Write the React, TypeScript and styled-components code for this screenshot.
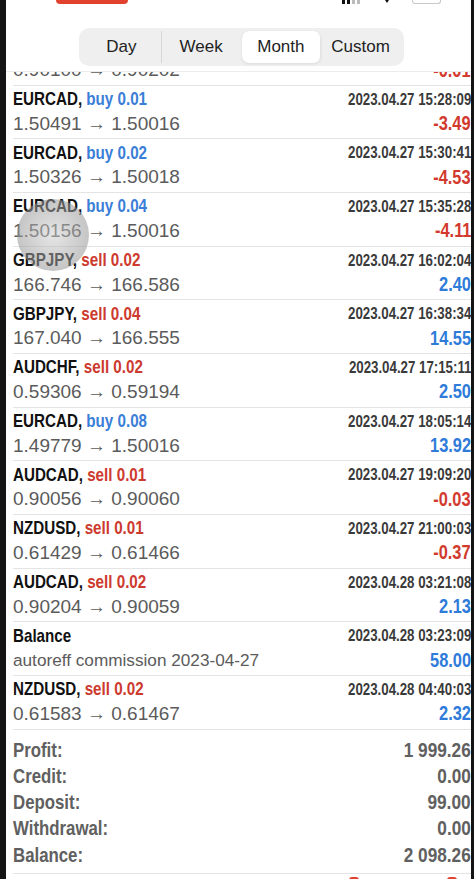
import React from 'react'
import styled, { createGlobalStyle, css } from 'styled-components'

type Deal = {
  symbol: string
  side?: 'buy' | 'sell'
  volume?: string
  prices: string
  time: string
  profit: string
}

const deals: Deal[] = [
  { symbol: 'EURCAD', side: 'buy', volume: '0.01', prices: '1.50491 → 1.50016', time: '2023.04.27 15:28:09', profit: '-3.49' },
  { symbol: 'EURCAD', side: 'buy', volume: '0.02', prices: '1.50326 → 1.50018', time: '2023.04.27 15:30:41', profit: '-4.53' },
  { symbol: 'EURCAD', side: 'buy', volume: '0.04', prices: '1.50156 → 1.50016', time: '2023.04.27 15:35:28', profit: '-4.11' },
  { symbol: 'GBPJPY', side: 'sell', volume: '0.02', prices: '166.746 → 166.586', time: '2023.04.27 16:02:04', profit: '2.40' },
  { symbol: 'GBPJPY', side: 'sell', volume: '0.04', prices: '167.040 → 166.555', time: '2023.04.27 16:38:34', profit: '14.55' },
  { symbol: 'AUDCHF', side: 'sell', volume: '0.02', prices: '0.59306 → 0.59194', time: '2023.04.27 17:15:11', profit: '2.50' },
  { symbol: 'EURCAD', side: 'buy', volume: '0.08', prices: '1.49779 → 1.50016', time: '2023.04.27 18:05:14', profit: '13.92' },
  { symbol: 'AUDCAD', side: 'sell', volume: '0.01', prices: '0.90056 → 0.90060', time: '2023.04.27 19:09:20', profit: '-0.03' },
  { symbol: 'NZDUSD', side: 'sell', volume: '0.01', prices: '0.61429 → 0.61466', time: '2023.04.27 21:00:03', profit: '-0.37' },
  { symbol: 'AUDCAD', side: 'sell', volume: '0.02', prices: '0.90204 → 0.90059', time: '2023.04.28 03:21:08', profit: '2.13' },
  { symbol: 'Balance', prices: 'autoreff commission 2023-04-27', time: '2023.04.28 03:23:09', profit: '58.00' },
  { symbol: 'NZDUSD', side: 'sell', volume: '0.02', prices: '0.61583 → 0.61467', time: '2023.04.28 04:40:03', profit: '2.32' },
]

const totals = [
  ['Profit:', '1 999.26'],
  ['Credit:', '0.00'],
  ['Deposit:', '99.00'],
  ['Withdrawal:', '0.00'],
  ['Balance:', '2 098.26'],
]

const periods = ['Day', 'Week', 'Month', 'Custom']

const GlobalStyle = createGlobalStyle`
  html, body {
    margin: 0;
    padding: 0;
    background: #111;
  }
  body {
    font-family: "Liberation Sans", Arial, sans-serif;
  }
`

export default function App() {
  return (
    <>
      <GlobalStyle />
      <Page>
        <Edge $w={6} />
        <Screen>
          <Header>
            <StatusBar>
              <RecordPill />
              <StatusIcons>
                <svg width="20" height="4" viewBox="0 0 20 4">
                  <rect x="0" y="0" width="3" height="4" fill="#111" />
                  <rect x="5" y="0" width="3" height="4" fill="#111" />
                  <rect x="10" y="0" width="3" height="4" fill="#bbb" />
                  <rect x="15" y="0" width="3" height="4" fill="#bbb" />
                </svg>
                <svg width="6" height="4" viewBox="0 0 6 4">
                  <path d="M1 0 L5 0 L3 3 Z" fill="#111" />
                </svg>
                <Battery />
              </StatusIcons>
            </StatusBar>
            <Segmented>
              {periods.map((p, i) => (
                <Segment key={p} $active={p === 'Month'} $divider={i === 0}>
                  {p}
                </Segment>
              ))}
            </Segmented>
          </Header>

          <Viewport>
            <Scroller>
              <Row>
                <Line>
                  <Title>NZDUSD, <Side $side="sell">sell 0.01</Side></Title>
                  <Time>2023.04.27 14:51:40</Time>
                </Line>
                <Line $sub>
                  <Prices>0.90100 → 0.90202</Prices>
                  <Profit $neg>-0.01</Profit>
                </Line>
              </Row>
              {deals.map((d, i) => (
                <Row key={i}>
                  <Line>
                    <Title>
                      {d.symbol}
                      {d.side && (
                        <>
                          , <Side $side={d.side}>{d.side} {d.volume}</Side>
                        </>
                      )}
                    </Title>
                    <Time>{d.time}</Time>
                  </Line>
                  <Line $sub>
                    <Prices $small={!d.side}>{d.prices}</Prices>
                    <Profit $neg={d.profit.startsWith('-')}>{d.profit}</Profit>
                  </Line>
                </Row>
              ))}
              <Summary>
                {totals.map(([label, value]) => (
                  <SummaryLine key={label}>
                    <SummaryLabel>{label}</SummaryLabel>
                    <SummaryValue>{value}</SummaryValue>
                  </SummaryLine>
                ))}
              </Summary>
              <Toolbar>
                <ToolMark />
                <ToolMark />
              </Toolbar>
            </Scroller>
          </Viewport>
          <TouchDot />
        </Screen>
        <Edge $w={3} />
      </Page>
    </>
  )
}

/* ================= STYLES ================= */

// the app uses a condensed bold face; squeeze Liberation Sans Bold to match
const condensed = (origin: 'left' | 'right') => css`
  display: inline-block;
  font-family: "Liberation Sans", Arial, sans-serif;
  font-weight: bold;
  transform: scaleX(0.82);
  transform-origin: ${origin} center;
`

const Page = styled.div`
  display: flex;
  width: 474px;
  height: 879px;
  overflow: hidden;
  background: #fff;
`

const Edge = styled.div<{ $w: number }>`
  flex: 0 0 ${(p) => p.$w}px;
  background: #141414;
`

const Screen = styled.div`
  position: relative;
  flex: 1;
  display: flex;
  flex-direction: column;
  background: #fff;
  overflow: hidden;
`

const Header = styled.div`
  display: flex;
  flex-direction: column;
  align-items: center;
  height: 72px;
  box-sizing: border-box;
  padding-left: 6px;
  border-bottom: 1px solid #ececec;
  background: #fff;
`

const StatusBar = styled.div`
  align-self: stretch;
  display: flex;
  justify-content: space-between;
  height: 6px;
  padding-left: 44px;
  padding-right: 30px;
`

const RecordPill = styled.div`
  width: 72px;
  height: 4px;
  background: #e2412f;
  border-radius: 0 0 8px 8px;
`

const StatusIcons = styled.div`
  display: flex;
  align-items: flex-start;
  gap: 22px;
`

const Battery = styled.div`
  width: 27px;
  height: 3px;
  border: 1px solid #c8c8c8;
  border-top: none;
  border-radius: 0 0 3px 3px;
`

const Segmented = styled.div`
  display: flex;
  width: 325px;
  height: 38px;
  margin-top: 22px;
  padding: 3px;
  box-sizing: border-box;
  background: #efeff0;
  border-radius: 10px;
`

const Segment = styled.div<{ $active?: boolean; $divider?: boolean }>`
  flex: 1 1 0;
  min-width: 0;
  display: flex;
  align-items: center;
  justify-content: center;
  font-family: "Liberation Sans", Arial, sans-serif;
  font-size: 17px;
  line-height: 20px;
  color: #222;
  background: ${(p) => (p.$active ? '#fff' : 'transparent')};
  box-shadow: ${(p) => (p.$active ? '0 1px 3px rgba(0,0,0,0.08)' : 'none')};
  border-right: 1px solid ${(p) => (p.$divider ? '#d6d6d8' : 'transparent')};
  border-radius: ${(p) => (p.$divider ? '0' : '7px')};
  background-clip: padding-box;
`

const Viewport = styled.div`
  flex: 1;
  overflow: hidden;
`

const Scroller = styled.div`
  margin-top: -40px;
`

const Row = styled.div`
  height: 53.67px;
  box-sizing: border-box;
  margin-left: 7px;
  padding-top: 2px;
  border-bottom: 1px solid #e4e4e4;
`

const Line = styled.div<{ $sub?: boolean }>`
  display: flex;
  justify-content: space-between;
  align-items: center;
  height: ${(p) => (p.$sub ? 26 : 23)}px;
  white-space: nowrap;
`

const Title = styled.span`
  ${condensed('left')};
  font-size: 18.5px;
  color: #111;
`

const Side = styled.span<{ $side: 'buy' | 'sell' }>`
  color: ${(p) => (p.$side === 'buy' ? '#3a7ed8' : '#cd3a2e')};
`

const Time = styled.span`
  ${condensed('right')};
  font-size: 16.2px;
  color: #3a3a3a;
`

const Prices = styled.span<{ $small?: boolean }>`
  font-family: "Liberation Sans", Arial, sans-serif;
  font-size: ${(p) => (p.$small ? 17.2 : 19)}px;
  color: #5b5b5b;
`

const Profit = styled.span<{ $neg?: boolean }>`
  ${condensed('right')};
  font-size: 20px;
  color: ${(p) => (p.$neg ? '#d23a2e' : '#2f7bd9')};
`

const Summary = styled.div`
  margin-left: 7px;
  padding: 7px 0 5px;
  border-bottom: 1px solid #e4e4e4;
`

const SummaryLine = styled.div`
  display: flex;
  justify-content: space-between;
  align-items: center;
  height: 26.25px;
  white-space: nowrap;
`

const SummaryLabel = styled.span`
  ${condensed('left')};
  font-size: 20.5px;
  color: #606060;
`

const SummaryValue = styled.span`
  ${condensed('right')};
  font-size: 21px;
  color: #606060;
`

const Toolbar = styled.div`
  display: flex;
  justify-content: flex-end;
  gap: 88px;
  padding: 3px 14px 0 0;
`

const ToolMark = styled.div`
  width: 10px;
  height: 6px;
  border-radius: 3px 3px 0 0;
  background: #e2412f;
`

const TouchDot = styled.div`
  position: absolute;
  left: 11px;
  top: 199px;
  width: 72px;
  height: 72px;
  border-radius: 50%;
  background: radial-gradient(circle, rgba(205, 205, 205, 0.5) 0%, rgba(150, 150, 150, 0.55) 70%, rgba(130, 130, 130, 0.6) 100%);
  pointer-events: none;
`
